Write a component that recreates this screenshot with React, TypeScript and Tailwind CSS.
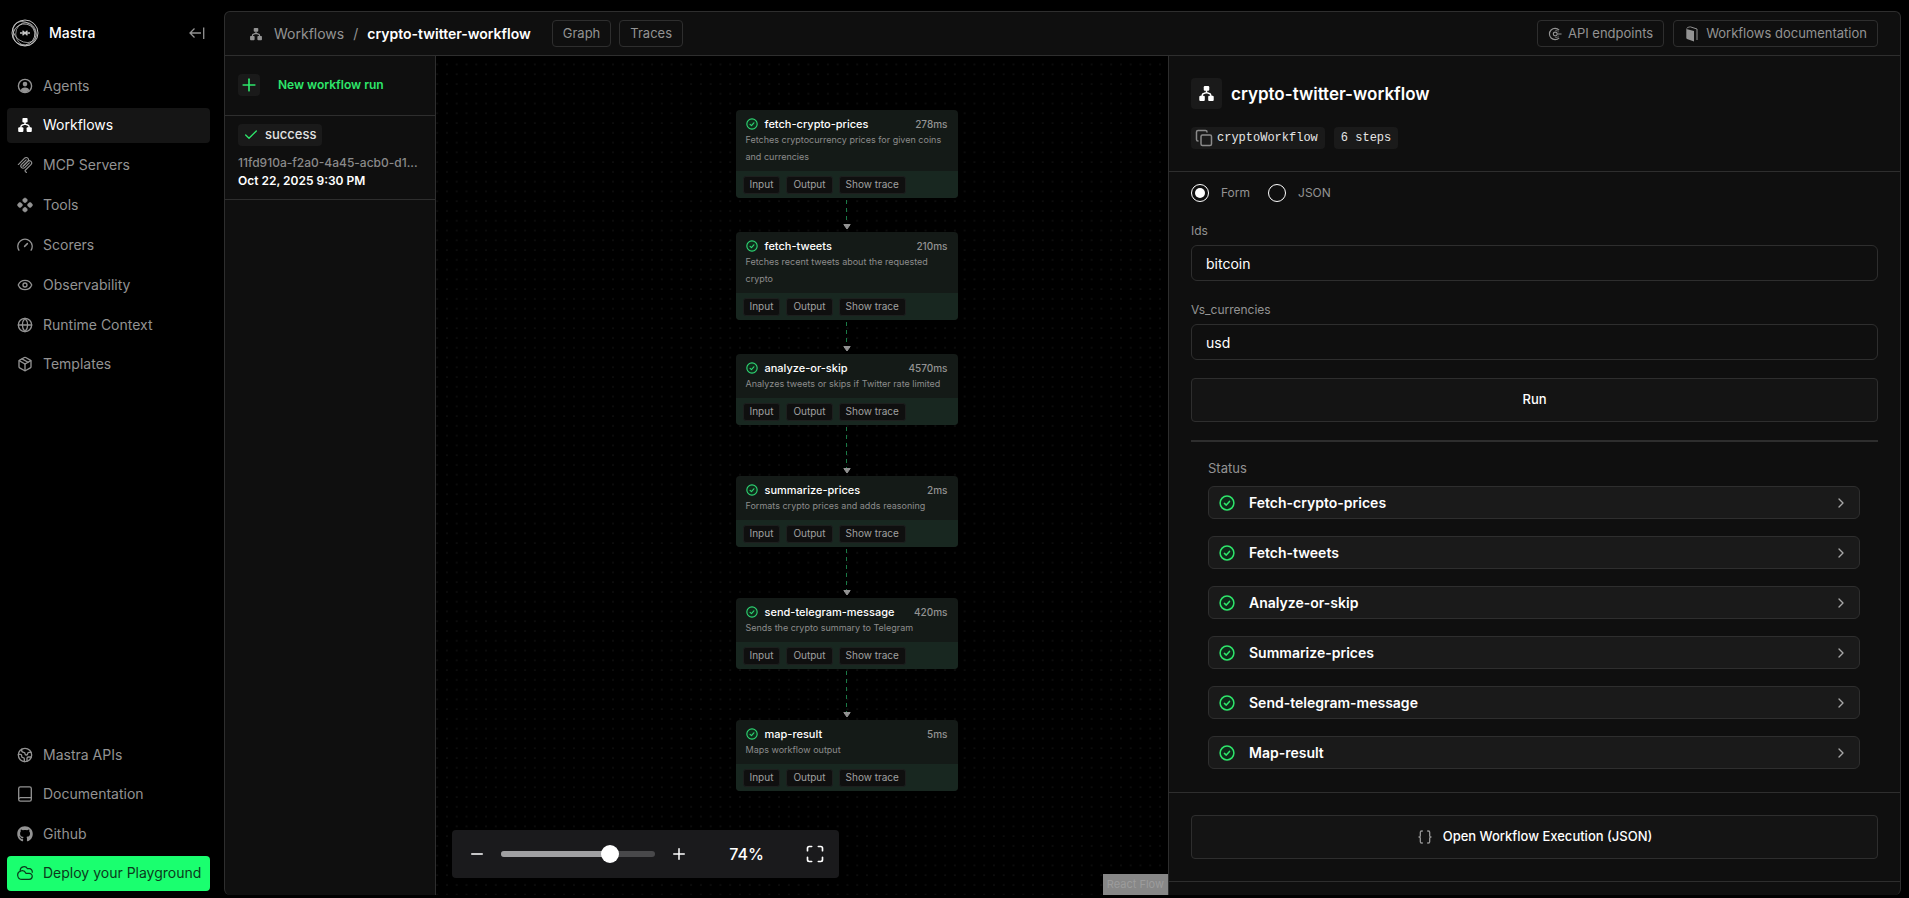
import React, { useState } from "react";
import {
  Braces,
  Check,
  ChevronRight,
  Copy,
  Earth,
  Eye,
  Globe,
  Maximize,
  Minus,
  Package,
  Plus,
} from "lucide-react";
import { FaGithub } from "react-icons/fa";

type IconProps = { className?: string };

const AgentIcon = ({ className }: IconProps) => (
  <svg viewBox="0 0 16 16" fill="none" className={className} aria-hidden="true">
    <circle cx="8" cy="8" r="6.6" stroke="currentColor" strokeWidth="1.4" />
    <circle cx="8" cy="6.1" r="2.3" fill="currentColor" />
    <path d="M3.8 12.4C4.2 10.3 5.6 9.5 8 9.5s3.8.8 4.2 2.9C11 13.6 9.7 14.2 8 14.2s-3-.6-4.2-1.8z" fill="currentColor" />
  </svg>
);

const WorkflowIcon = ({ className }: IconProps) => (
  <svg viewBox="0 0 16 16" fill="none" className={className} aria-hidden="true">
    <rect x="5.4" y="1" width="5.2" height="4.4" rx="1" fill="currentColor" />
    <path d="M8 5v3M3.9 11V9.8C3.9 8.6 4.9 8 5.9 7.8L8 7.2l2.1.6c1 .2 2 .8 2 2V11" stroke="currentColor" strokeWidth="1.4" />
    <rect x="1.2" y="10.2" width="5.2" height="4.8" rx="1" fill="currentColor" />
    <rect x="9.6" y="10.2" width="5.2" height="4.8" rx="1" fill="currentColor" />
  </svg>
);

const McpIcon = ({ className }: IconProps) => (
  <svg viewBox="6 4 168 172" fill="none" className={className} stroke="currentColor" strokeWidth="12" strokeLinecap="round" aria-hidden="true">
    <path d="M18 84.85L85.88 16.97c9.37-9.37 24.57-9.37 33.94 0 9.37 9.37 9.37 24.57 0 33.94L68.56 102.18" />
    <path d="M69.27 101.47l50.55-50.56c9.38-9.37 24.57-9.37 33.95 0l.35.36c9.37 9.37 9.37 24.57 0 33.94L92.72 146.6c-3.12 3.12-3.12 8.19 0 11.31l12.61 12.61" />
    <path d="M102.85 33.94L52.65 84.15c-9.37 9.37-9.37 24.56 0 33.94 9.37 9.37 24.57 9.37 33.94 0l50.2-50.21" />
  </svg>
);

const ToolsIcon = ({ className }: IconProps) => (
  <svg viewBox="0 0 16 16" fill="currentColor" className={className} aria-hidden="true">
    <path
      d="M8 .8l2.2 1.5v2L8 5.9 5.8 4.3v-2zM8 10.1l2.2 1.6v2L8 15.2l-2.2-1.5v-2zM3.4 5.5l1.9 1.5v2l-1.9 1.5h-1.1L.7 9V7l1.6-1.5zM12.6 5.5h1.1L15.3 7v2l-1.6 1.5h-1.1L10.7 9V7z"
      stroke="currentColor"
      strokeWidth="0.5"
      strokeLinejoin="round"
    />
  </svg>
);

const ScorerIcon = ({ className }: IconProps) => (
  <svg viewBox="0 0 16 16" fill="none" className={className} stroke="currentColor" strokeWidth="1.3" strokeLinecap="round" aria-hidden="true">
    <path d="M1.9 13.2A7.2 7.2 0 1 1 14.1 13.2" />
    <path d="M7.6 9.4l2.8-2.8" strokeWidth="1.5" />
  </svg>
);

const DocumentIcon = ({ className }: IconProps) => (
  <svg viewBox="0 0 16 16" fill="none" className={className} stroke="currentColor" strokeWidth="1.3" strokeLinejoin="round" aria-hidden="true">
    <path d="M3.4.8h9.2c1 0 1.7.7 1.7 1.7v11c0 1-.7 1.7-1.7 1.7H3.4a1.7 1.7 0 0 1-1.7-1.7v-11C1.7 1.5 2.4.8 3.4.8z" />
    <path d="M1.9 12.7c.2-.7.8-1.1 1.5-1.1h10.9" />
  </svg>
);

const CloudIcon = ({ className }: IconProps) => (
  <svg viewBox="0 0 16 16" fill="none" className={className} stroke="currentColor" strokeWidth="1.2" strokeLinecap="round" strokeLinejoin="round" aria-hidden="true">
    <path d="M5 14.4a4.3 4.3 0 1 1 3.9-6.1h3.3a3.05 3.05 0 0 1 0 6.1z" />
    <path d="M3.2 5.9A3.9 3.9 0 0 1 10.5 3.7h1.8a3 3 0 0 1 2.9 3.6" />
  </svg>
);

const ApiIcon = ({ className }: IconProps) => (
  <svg viewBox="0 0 16 16" fill="none" className={className} stroke="currentColor" strokeWidth="1.3" aria-hidden="true">
    <circle cx="8.3" cy="8" r="2.2" />
    <path d="M12.7 3.6A6.4 6.4 0 1 0 12.7 12.4M10.5 8H15.5" />
    <path d="M12.3 5.7A4.6 4.6 0 0 0 8.3 3.9M12.3 10.3A4.6 4.6 0 0 1 8.3 12.1" strokeWidth="0.8" />
  </svg>
);

const DocsIcon = ({ className }: IconProps) => (
  <svg viewBox="0 0 16 16" fill="none" className={className} aria-hidden="true">
    <path d="M2.3 2.9L10 5v10.5L3 13.1c-.4-.2-.7-.5-.7-1z" fill="currentColor" />
    <path d="M2.6 2.5C3.3 1.5 5 .9 6.5.9L13 3v11" stroke="currentColor" strokeWidth="1" />
  </svg>
);

const CollapseIcon = ({ className }: IconProps) => (
  <svg viewBox="0 0 16 16" fill="none" className={className} stroke="currentColor" strokeWidth="1.3" aria-hidden="true">
    <path d="M14.7 2.5v11.5M12 8H1M5.5 3.5L1 8l4.5 4.5" />
  </svg>
);

const SuccessIcon = ({ className }: IconProps) => (
  <svg viewBox="0 0 16 16" fill="none" className={className} stroke="currentColor" aria-hidden="true">
    <circle cx="8" cy="8" r="6.9" strokeWidth="1.5" fill="#0f2a1a" />
    <path d="M5.4 8.4l1.9 1.7 3.2-3.7" strokeWidth="1.5" strokeLinecap="round" strokeLinejoin="round" />
  </svg>
);

const Logo = ({ className }: IconProps) => (
  <svg viewBox="0 0 28 28" fill="none" className={className} stroke="currentColor" aria-hidden="true">
    <circle cx="14" cy="14" r="13" strokeWidth="1" />
    <ellipse cx="13" cy="15.5" rx="11" ry="10.5" strokeWidth="0.8" transform="rotate(-30 13 15.5)" />
    <ellipse cx="15" cy="15" rx="10.3" ry="11.5" strokeWidth="0.7" />
    <ellipse cx="13.5" cy="13" rx="12.5" ry="9.5" strokeWidth="0.7" transform="rotate(35 13.5 13)" />
    <path d="M9 14h10M11.5 11.7L14 14l-2.5 2.3M16.5 11.7L14 14l2.5 2.3" strokeWidth="1.4" />
  </svg>
);

const mainNav = [
  { label: "Agents", icon: AgentIcon },
  { label: "Workflows", icon: WorkflowIcon, active: true },
  { label: "MCP Servers", icon: McpIcon },
  { label: "Tools", icon: ToolsIcon },
  { label: "Scorers", icon: ScorerIcon },
  { label: "Observability", icon: Eye },
  { label: "Runtime Context", icon: Globe },
  { label: "Templates", icon: Package },
];

const footerNav = [
  { label: "Mastra APIs", icon: Earth },
  { label: "Documentation", icon: DocumentIcon },
  { label: "Github", icon: FaGithub },
  { label: "Deploy your Playground", icon: CloudIcon, cta: true },
];

const steps = [
  { name: "fetch-crypto-prices", time: "278ms", text: "Fetches cryptocurrency prices for given coins and currencies" },
  { name: "fetch-tweets", time: "210ms", text: "Fetches recent tweets about the requested crypto" },
  { name: "analyze-or-skip", time: "4570ms", text: "Analyzes tweets or skips if Twitter rate limited" },
  { name: "summarize-prices", time: "2ms", text: "Formats crypto prices and adds reasoning" },
  { name: "send-telegram-message", time: "420ms", text: "Sends the crypto summary to Telegram" },
  { name: "map-result", time: "5ms", text: "Maps workflow output" },
];

type NavItemProps = {
  label: string;
  icon: React.ComponentType<IconProps>;
  active?: boolean;
  cta?: boolean;
};

function NavItem({ label, icon: Icon, active, cta }: NavItemProps) {
  const tone = cta
    ? "bg-[#1aff6f] text-[#0b3a1c]"
    : active
      ? "bg-[#151515] text-white"
      : "text-[#939393]";
  return (
    <li>
      <a
        href="#"
        className={`flex h-[35px] items-center gap-2.5 whitespace-nowrap rounded pl-2.5 text-sm ${tone}`}
      >
        <Icon className="size-4 shrink-0" />
        {label}
      </a>
    </li>
  );
}

function Sidebar() {
  return (
    <aside className="flex w-56 shrink-0 flex-col px-[7px] pb-[7px] pt-[19px]">
      <div className="flex items-center gap-2.5 pl-1 pr-3">
        <Logo className="size-7 text-[#c4c4c4]" />
        <span className="flex-1 text-sm font-medium text-white">Mastra</span>
        <button type="button" aria-label="Collapse sidebar" className="text-[#939393]">
          <CollapseIcon className="size-4" />
        </button>
      </div>
      <nav aria-label="Main" className="mr-[7px] flex grow flex-col justify-between pt-[21px]">
        <ul className="flex h-[314px] flex-col justify-between">
          {mainNav.map((item) => (
            <NavItem key={item.label} {...item} />
          ))}
        </ul>
        <ul className="flex h-[154px] flex-col justify-between">
          {footerNav.map((item) => (
            <NavItem key={item.label} {...item} />
          ))}
        </ul>
      </nav>
    </aside>
  );
}

const headerButton =
  "flex h-[27px] items-center gap-1.5 whitespace-nowrap rounded border border-[#2e2e2e] px-2.5 text-[13px] text-[#939393]";

function Header() {
  return (
    <header className="flex h-11 shrink-0 items-center border-b border-[#2e2e2e] pl-6 pr-[22px]">
      <WorkflowIcon className="size-3.5 text-[#939393]" />
      <nav aria-label="Breadcrumb" className="ml-[11px] flex gap-[9px] text-sm">
        <a href="#" className="text-[#939393]">Workflows</a>
        <span className="text-[#939393]">/</span>
        <span className="font-semibold text-white">crypto-twitter-workflow</span>
      </nav>
      <div className="ml-[21px] flex gap-2">
        <button type="button" className={headerButton}>Graph</button>
        <button type="button" className={headerButton}>Traces</button>
      </div>
      <div className="ml-auto flex gap-[9px]">
        <a href="#" className={headerButton}>
          <ApiIcon className="size-3.5" />
          API endpoints
        </a>
        <a href="#" className={headerButton}>
          <DocsIcon className="size-4" />
          Workflows documentation
        </a>
      </div>
    </header>
  );
}

function RunList() {
  return (
    <section aria-label="Workflow runs" className="w-[211px] shrink-0 border-r border-[#2e2e2e]">
      <a href="#" className="flex h-[60px] items-center gap-[18px] border-b border-[#2e2e2e] px-[13px] pb-0.5 text-xs font-semibold text-[#2ee66b]">
        <span className="flex size-[22px] items-center justify-center rounded bg-[#1a1a1a]">
          <Plus className="size-5" />
        </span>
        New workflow run
      </a>
      <a href="#" className="block border-b border-[#2e2e2e] px-[13px] pb-[9px] pt-2 text-xs">
        <span className="mb-2 flex h-[22px] w-fit items-center gap-1.5 rounded bg-[#1a1a1a] pl-[5px] pr-1.5 font-medium text-[#e2e2e2]">
          <Check className="size-4 text-[#2ee66b]" />
          <span className="text-[13px]">success</span>
        </span>
        <span className="block whitespace-nowrap font-medium leading-[18px] text-[#8a8a8a]">11fd910a-f2a0-4a45-acb0-d1...</span>
        <span className="block font-semibold leading-[18px] text-white">Oct 22, 2025 9:30 PM</span>
      </a>
    </section>
  );
}

const nodeButton = "h-[18px] rounded-[3px] border border-[#1d1f1e] bg-[#0f0f0f] px-1.5 text-[#a0a0a0]";

function StepNode({ name, time, text }: (typeof steps)[number]) {
  return (
    <article className="w-[222px] overflow-hidden rounded bg-[#141a17] text-[10px]">
      <div className="px-2.5 pb-1.5 pt-[7px]">
        <div className="flex h-3.5 items-center">
          <SuccessIcon className="mr-[7px] size-3 text-[#2ed573]" />
          <h3 className="flex-1 text-[11px] font-medium text-white">{name}</h3>
          <span className="font-medium text-[#939393]">{time}</span>
        </div>
        <p className="text-[9px] leading-[17px] text-[#8c8c8c]">{text}</p>
      </div>
      <div className="flex h-[27px] items-center gap-1.5 bg-[#182720] px-[7px]">
        <button type="button" className={nodeButton}>Input</button>
        <button type="button" className={nodeButton}>Output</button>
        <button type="button" className={nodeButton}>Show trace</button>
      </div>
    </article>
  );
}

function Edge() {
  return (
    <div className="flex grow flex-col items-center py-0.5">
      <div className="w-px grow bg-[repeating-linear-gradient(to_bottom,#1a7a46_0_4px,transparent_4px_8px)]" />
      <svg viewBox="0 0 8 6" className="h-1.5 w-2 fill-[#939393]" aria-hidden="true">
        <path d="M.8.5h6.4L4 5z" stroke="#939393" strokeWidth="1" strokeLinejoin="round" />
      </svg>
    </div>
  );
}

function Canvas() {
  const [zoom, setZoom] = useState(74);
  const fill = zoom === 74 ? 71 : (zoom - 25) / 0.75;
  return (
    <section aria-label="Workflow graph" className="relative min-w-0 flex-1 overflow-hidden bg-black">
      <svg className="absolute inset-0 size-full" aria-hidden="true">
        <pattern id="dots" x="-3.7" y="3.5" width="9.768" height="9.768" patternUnits="userSpaceOnUse">
          <circle cx="4.884" cy="4.884" r="0.5" fill="#3a3a3a" />
        </pattern>
        <rect width="100%" height="100%" fill="url(#dots)" />
      </svg>
      <ol className="relative flex flex-col items-center pl-[89px] pt-[54px]">
        {steps.map((step, i) => (
          <li key={step.name} className="flex h-[122px] flex-col">
            <StepNode {...step} />
            {i < steps.length - 1 && <Edge />}
          </li>
        ))}
      </ol>
      <div className="absolute bottom-[17px] left-4 flex h-12 w-[387px] items-center rounded bg-[#1a1a1c] pl-4 pr-3.5 text-white">
        <button type="button" aria-label="Zoom out" onClick={() => setZoom(Math.max(25, zoom - 5))}>
          <Minus className="size-[18px]" />
        </button>
        <div className="relative ml-[15px] h-[18px] w-[154px]">
          <div className="absolute inset-x-0 top-1.5 h-1.5 overflow-hidden rounded-full bg-[#48484a]">
            <div className="h-full bg-[#a0a0a2]" style={{ width: `${fill}%` }} />
          </div>
          <div className="absolute top-0 size-[18px] -translate-x-1/2 rounded-full bg-white" style={{ left: `${fill}%` }} />
          <input
            type="range"
            aria-label="Zoom level"
            min={25}
            max={100}
            value={zoom}
            onChange={(e) => setZoom(Number(e.target.value))}
            className="absolute inset-0 w-full opacity-0"
          />
        </div>
        <button type="button" aria-label="Zoom in" className="ml-[15px]" onClick={() => setZoom(Math.min(100, zoom + 5))}>
          <Plus className="size-[18px]" />
        </button>
        <span className="flex-1 pl-3 text-center text-base font-medium">{zoom}%</span>
        <button type="button" aria-label="Fit view" className="ml-3">
          <Maximize className="size-5" />
        </button>
      </div>
      <a href="#" className="absolute bottom-0 right-0 bg-[#878787] px-1 py-px text-[11px] leading-[19px] text-[#9c9c9c]">
        React Flow
      </a>
    </section>
  );
}

function Field({ id, label, value }: { id: string; label: string; value: string }) {
  return (
    <div>
      <label htmlFor={id} className="block text-xs leading-4 text-[#939393]">{label}</label>
      <input
        id={id}
        defaultValue={value}
        className="mt-1.5 h-9 w-full rounded-md border border-[#2e2e2e] bg-transparent px-3.5 text-sm text-white outline-none"
      />
    </div>
  );
}

const wideButton =
  "flex h-11 w-full items-center justify-center gap-2.5 rounded border border-[#2e2e2e] bg-[#141414] text-[13px] font-medium text-white";

const radio =
  "size-[18px] appearance-none rounded-full border border-white bg-clip-content p-[3px] checked:bg-white";

function DetailPanel() {
  return (
    <section aria-label="Workflow details" className="flex w-[732px] shrink-0 flex-col border-l border-[#2e2e2e]">
      <div className="border-b border-[#2e2e2e] px-[22px] py-[22px]">
        <div className="flex items-center gap-[9px]">
          <span className="flex size-[31px] items-center justify-center rounded bg-[#1a1a1a] text-white">
            <WorkflowIcon className="size-[17px]" />
          </span>
          <h2 className="text-[17px] font-semibold leading-6 text-white">crypto-twitter-workflow</h2>
        </div>
        <div className="mt-[18px] flex gap-[9px] font-['Liberation_Mono',monospace] text-xs text-[#e6e6e6]">
          <button type="button" className="flex h-[22px] items-center gap-1 rounded bg-[#1a1a1a] pl-1 pr-[7px]">
            <Copy className="size-[18px] text-[#8a8a8a]" />
            cryptoWorkflow
          </button>
          <span className="flex h-[22px] items-center rounded bg-[#1a1a1a] px-[7px]">6 steps</span>
        </div>
      </div>
      <form className="px-[22px] pt-3" onSubmit={(e) => e.preventDefault()}>
        <div className="mb-[21px] flex items-center text-xs text-[#939393]">
          <input id="mode-form" name="mode" type="radio" defaultChecked className={radio} />
          <label htmlFor="mode-form" className="ml-3 mr-[18px]">Form</label>
          <input id="mode-json" name="mode" type="radio" className={radio} />
          <label htmlFor="mode-json" className="ml-3">JSON</label>
        </div>
        <div className="mb-[18px] flex flex-col gap-[21px]">
          <Field id="ids" label="Ids" value="bitcoin" />
          <Field id="currencies" label="Vs_currencies" value="usd" />
        </div>
        <button type="submit" className={wideButton}>Run</button>
      </form>
      <div className="mx-[22px] mt-[18px] border-t-2 border-[#2e2e2e] pl-[17px] pr-[18px] pt-4">
        <h3 className="text-[13px] leading-5 text-[#939393]">Status</h3>
        <ul className="mt-2 flex flex-col gap-[17px]">
          {steps.map((step) => (
            <li key={step.name}>
              <button
                type="button"
                className="flex h-[33px] w-full items-center rounded-md border border-[#2e2e2e] bg-[#1a1a1a] px-2.5 text-sm font-semibold text-white"
              >
                <SuccessIcon className="mr-3.5 size-4 text-[#2ee66b]" />
                {step.name.charAt(0).toUpperCase() + step.name.slice(1)}
                <ChevronRight className="ml-auto size-4 text-[#a6a6a6]" />
              </button>
            </li>
          ))}
        </ul>
      </div>
      <div className="mt-[23px] border-y border-[#2e2e2e] px-[22px] py-[22px]">
        <button type="button" className={wideButton}>
          <Braces className="size-4 text-[#939393]" />
          Open Workflow Execution (JSON)
        </button>
      </div>
    </section>
  );
}

export default function App() {
  return (
    <div className="flex h-screen overflow-hidden bg-black font-['Inter',sans-serif]">
      <Sidebar />
      <main className="mb-[3px] mr-2 mt-[11px] flex min-w-0 flex-1 flex-col overflow-hidden rounded-md border border-b-0 border-[#2e2e2e] bg-[#0f0f0f]">
        <Header />
        <div className="flex min-h-0 flex-1">
          <RunList />
          <Canvas />
          <DetailPanel />
        </div>
      </main>
    </div>
  );
}
